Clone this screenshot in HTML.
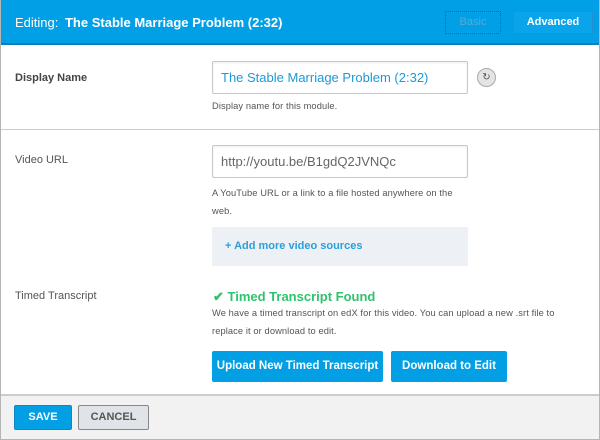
<!DOCTYPE html>
<html><head><style>
*{box-sizing:border-box;margin:0;padding:0}
body{width:600px;height:440px;overflow:hidden;font-family:"Liberation Sans",sans-serif;background:#fff;position:relative}
.frame{position:absolute;left:0;top:0;width:600px;height:440px;border:1px solid #b5b5b5;border-top:none}
.hdr{position:absolute;left:0;top:0;width:600px;height:45px;background:#009fe6;border-bottom:2px solid #0a7fb8}
.hdr .t{position:absolute;left:15px;top:15px;color:#fff;font-size:13px}
.hdr .t b{margin-left:3px}
.basic{position:absolute;left:445px;top:11px;width:56px;height:23px;border:1px dotted #0b6fa6;color:#5aa9d3;font-size:11px;text-align:center;line-height:21px}
.adv{position:absolute;left:513px;top:11px;width:80px;height:23px;background:#0aa4ea;border:1px solid #2590cf;color:#fff;font-size:11px;font-weight:bold;text-align:center;line-height:21px}
.lbl{position:absolute;left:15px;font-size:11px;font-weight:bold;color:#444}
.lbl.n{font-weight:normal;color:#555}
.inp{position:absolute;left:212px;width:256px;height:33px;border:1px solid #c8c8c8;border-radius:2px;font-size:13px;padding:8px 8px;box-shadow:inset 0 1px 2px #eee}
.help{position:absolute;left:212px;font-size:9.3px;color:#555;line-height:18px;letter-spacing:0.1px}
.sep{position:absolute;left:1px;width:598px;height:1px;background:#ccc}
.btn{position:absolute;background:#039fe4;color:#fff;font-size:11.5px;font-weight:bold;text-align:center;border-radius:2px;line-height:31px;height:31px;white-space:nowrap}
.foot{position:absolute;left:1px;top:394px;width:598px;height:46px;background:#f2f2f2;border-top:2px solid #ccc}
</style></head><body>
<div class="hdr"><div class="t">Editing: <b>The Stable Marriage Problem (2:32)</b></div>
<div class="basic">Basic</div><div class="adv">Advanced</div></div>
<div class="lbl" style="top:72px">Display Name</div>
<div class="inp" style="top:61px;color:#1c9ad8">The Stable Marriage Problem (2:32)</div>
<div style="position:absolute;left:477px;top:68px;width:19px;height:19px;border-radius:50%;background:#e4e4e4;border:1px solid #aaa;color:#555;font-size:10px;text-align:center;line-height:17px">&#8635;</div>
<div class="help" style="top:97px">Display name for this module.</div>
<div class="sep" style="top:129px"></div>
<div class="lbl n" style="top:154px">Video URL</div>
<div class="inp" style="top:145px;color:#666">http://youtu.be/B1gdQ2JVNQc</div>
<div class="help" style="top:184px">A YouTube URL or a link to a file hosted anywhere on the<br>web.</div>
<div style="position:absolute;left:212px;top:227px;width:256px;height:39px;background:#edf1f5;color:#2a9fd8;font-size:11px;font-weight:bold;line-height:39px;padding-left:13px">+ Add more video sources</div>
<div class="lbl n" style="top:290px">Timed Transcript</div>
<div style="position:absolute;left:213px;top:289px;color:#2ec26c;font-size:13px;font-weight:bold">&#10004; Timed Transcript Found</div>
<div class="help" style="top:304px">We have a timed transcript on edX for this video. You can upload a new .srt file to<br>replace it or download to edit.</div>
<div class="btn" style="left:212px;top:351px;width:171px">Upload New Timed Transcript</div>
<div class="btn" style="left:391px;top:351px;width:116px">Download to Edit</div>
<div class="foot"></div>
<div class="btn" style="left:14px;top:405px;width:58px;height:25px;line-height:23px;font-size:11px;border:1px solid #1286c4">SAVE</div>
<div style="position:absolute;left:78px;top:405px;width:71px;height:25px;line-height:23px;background:#e0e3e7;border:1px solid #888;border-radius:2px;color:#555;font-size:11px;font-weight:bold;text-align:center">CANCEL</div>
<div class="frame"></div>
</body></html>
